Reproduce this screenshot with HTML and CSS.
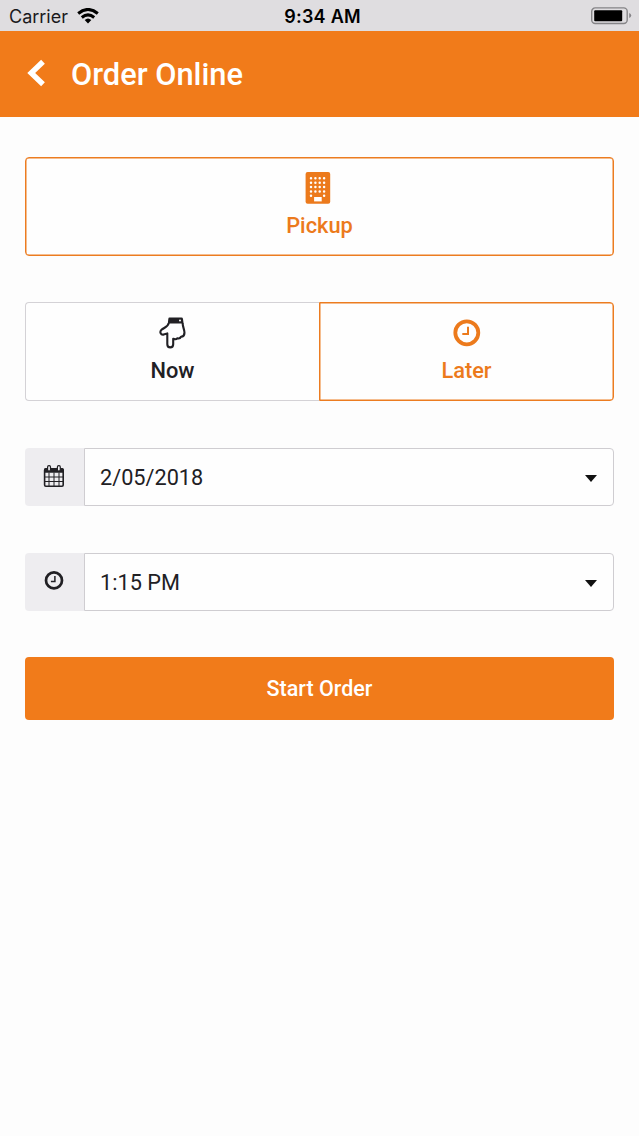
FILE: index.html
```html
<!DOCTYPE html>
<html lang="en">
<head>
<meta charset="utf-8">
<title>Order Online</title>
<link rel="stylesheet" href="styles.css">
</head>
<body>
<div class="status">
  <div class="carrier"><span>Carrier</span>
    <svg width="22" height="16" viewBox="0 0 22 16"><g fill="none" stroke="#000" stroke-width="3"><path d="M1.2 5.5Q11-2.6 20.8 5.5"/><path d="M4.8 9.5Q11 4.2 17.2 9.5"/></g><path d="M7.7 12Q11 9 14.3 12L11 15.4Z"/></svg>
  </div>
  <div class="time">9:34 AM</div>
  <div class="battery">
    <svg width="42" height="18" viewBox="0 0 42 18"><rect x="1.7" y=".9" width="35.5" height="15.6" rx="3.5" fill="none" stroke="#858487" stroke-width="1.4"/><rect x="4.2" y="3.2" width="28" height="11" rx="1" /><path d="M39.2 5.9Q41.2 6.5 41.2 8.4T39.2 10.9Z" fill="#858487"/></svg>
  </div>
</div>
<header class="header">
  <svg class="back" width="20" height="30" viewBox="0 0 20 30"><path d="M18 2.7 6.2 14 18 25.3" fill="none" stroke="#fff" stroke-width="5.4"/></svg>
  <h1>Order Online</h1>
</header>
<main class="content">
  <div class="options">
    <button class="option active">
      <svg class="building" width="26" height="32" viewBox="0 0 26 32"><rect x=".6" width="24.6" height="31.8" rx="2" fill="currentColor"/><path d="M6 6.3v19M10.4 6.3v14M14.7 6.3v14M19.1 6.3v19" fill="none" stroke="#fff" stroke-width="2.5" stroke-linecap="round" stroke-dasharray="0 4.37"/><rect x="9.1" y="25" width="7.6" height="4.4" fill="#fff"/></svg>
      <span>Pickup</span>
    </button>
  </div>
  <div class="options schedule">
    <button class="option first">
      <svg width="28" height="32" viewBox="0 0 28 32"><path d="M9.7 6C9.4 9.7 5 10.6 2.5 12.8.4 14.8 1.5 18 4.6 17.6L8.3 16.4V27.2C8.3 31.4 14.2 31.4 14.2 27.2V21.7C16.2 22.6 17.5 22.3 18.4 21.3C20 21.8 21.3 21.3 22 19.8C24.7 19.5 25.7 17.8 25.4 15C25.1 11.7 23.8 10 23.6 6" fill="none" stroke="currentColor" stroke-width="2.1" stroke-linejoin="round"/><path d="M10.5.6h11.9q1.5 0 1.6 1.4l.6 4.4H8.8L9.3 2Q9.4.6 10.5.6Z" fill="currentColor"/><circle cx="21" cy="3.4" r="1" fill="#fff"/></svg>
      <span>Now</span>
    </button>
    <button class="option last active">
      <svg width="28" height="32" viewBox="0 0 28 32"><circle cx="13.8" cy="15.8" r="11.5" fill="none" stroke="currentColor" stroke-width="3.8"/><path d="M15 9.7v7.4H9.3" fill="none" stroke="currentColor" stroke-width="2"/></svg>
      <span>Later</span>
    </button>
  </div>
  <div class="field">
    <div class="addon">
      <svg width="22" height="24" viewBox="0 0 22 24"><rect x="1.6" y="4" width="18.6" height="17.3" rx="1.2" fill="none" stroke="currentColor" stroke-width="1.6"/><path d="M1 7.7V4.5Q1 2.9 2.6 2.9h16.6q1.6 0 1.6 1.6v3.2Z" fill="currentColor"/><path d="M6 7.5v13.5M11 7.5v13.5M16 7.5v13.5M2 12h18.2M2 16.5h18.2" fill="none" stroke="currentColor" stroke-width="1"/><g fill="#eeedf0" stroke="currentColor" stroke-width="1.2"><rect x="4.6" y=".7" width="2.9" height="5.4" rx="1.3"/><rect x="14.4" y=".7" width="2.9" height="5.4" rx="1.3"/></g></svg>
    </div>
    <div class="value"><span>2/05/2018</span><i class="caret"></i></div>
  </div>
  <div class="field">
    <div class="addon">
      <svg width="22" height="24" viewBox="0 0 22 24"><circle cx="11" cy="10.4" r="8" fill="none" stroke="currentColor" stroke-width="2.7"/><path d="M11.9 6.1v5.4H7.9" fill="none" stroke="currentColor" stroke-width="1.5"/></svg>
    </div>
    <div class="value"><span>1:15 PM</span><i class="caret"></i></div>
  </div>
  <button class="submit">Start Order</button>
</main>
</body>
</html>
```
FILE: styles.css
```css
* { box-sizing: border-box; }
body { margin: 0; min-height: 1136px; background: #fdfdfd; color: #212024; font-family: Roboto, sans-serif; }
svg { display: block; flex: none; }
.status { height: 31px; padding: 0 6px 0 9px; display: grid; grid-template-columns: 1fr auto 1fr; align-items: center; background: #dfdde0; font-family: Inter, sans-serif; color: #1a191c; }
.carrier { display: flex; align-items: center; gap: 9px; font-size: 18px; line-height: 31px; padding-top: 1px; }
.carrier svg { margin-top: -2px; }
.time { font-size: 18px; font-weight: 600; line-height: 31px; padding: 1px 0 0 3px; letter-spacing: .25px; color: #000; }
.battery { display: flex; justify-content: flex-end; padding-right: 1px; }
.header { height: 86px; display: flex; align-items: center; padding-left: 25px; gap: 26px; background: #f17b1a; color: #fff; }
.header h1 { margin: 0; padding-top: 2px; font-size: 30.8px; font-weight: 500; line-height: 36px; }
.content { padding: 40px 25px 0; display: flex; flex-direction: column; }
.options { display: flex; height: 99px; margin-bottom: 46px; }
.options.schedule { margin-bottom: 47px; }
.option { flex: 1; display: flex; flex-direction: column; align-items: center; padding: 14px 0 0; gap: 8px; border: 1px solid #d4d2d6; border-radius: 4px; background: #fefefe; color: #212024; font: 500 21.8px/28px Roboto, sans-serif; }
.option.active { border-color: #ec7c20; color: #ec7a1c; box-shadow: inset 0 0 0 .5px #ec7c20; }
.option.first { border-right: 0; border-radius: 4px 0 0 4px; }
.option.last { border-radius: 0 4px 4px 0; }
.building { margin-right: 3px; }
.field { display: flex; height: 58px; margin-bottom: 47px; }
.field:nth-of-type(4) { margin-bottom: 46px; }
.addon { width: 59px; padding-right: 2px; display: flex; align-items: center; justify-content: center; background: #eeedf0; border-radius: 4px 0 0 4px; }
.value { flex: 1; display: flex; align-items: center; justify-content: space-between; padding: 1px 16px 0 15px; border: 1px solid #cfcdd1; border-radius: 0 4px 4px 0; background: #fefefe; font-size: 21.7px; line-height: 28px; }
.caret { border: 6.5px solid transparent; border-top: 7px solid #111; border-bottom: 0; margin-top: 2px; }
.submit { height: 63px; border: 0; border-radius: 4px; background: #f17b1a; color: #fff; font: 500 21.5px/28px Roboto, sans-serif; padding: 0; }
```
